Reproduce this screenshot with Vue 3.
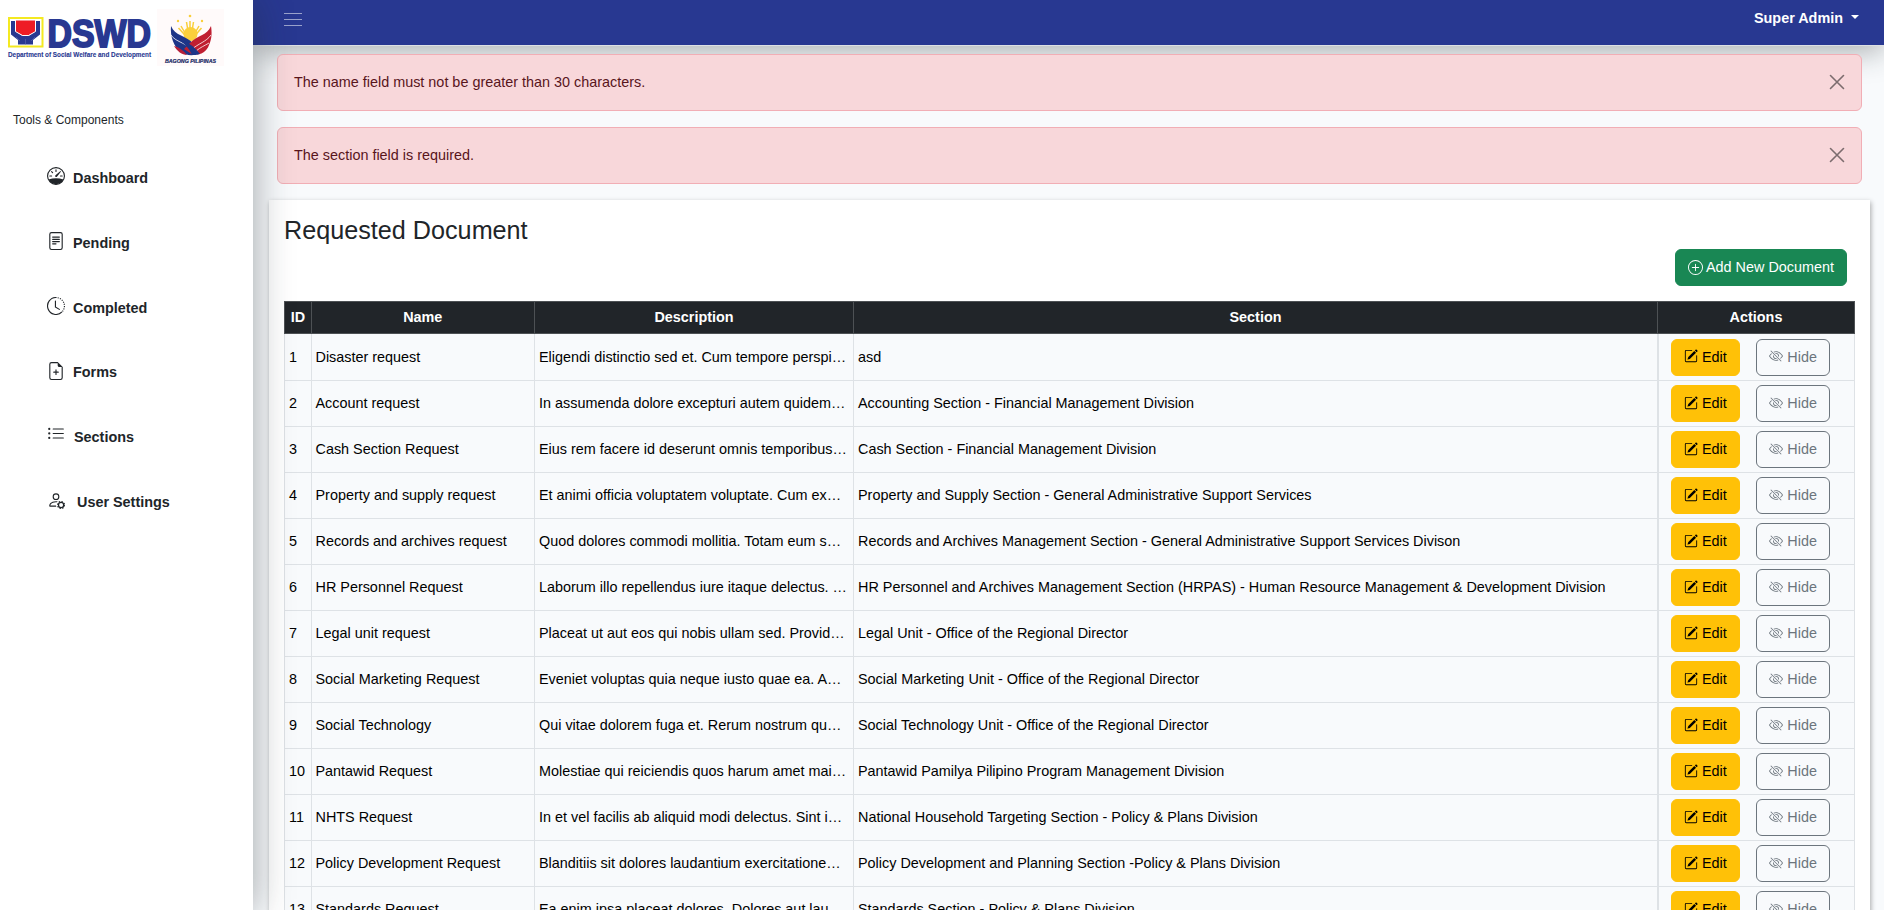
<script setup>
const nav = [
  { icon: 'dash', label: 'Dashboard' },
  { icon: 'file', label: 'Pending' },
  { icon: 'clock', label: 'Completed' },
  { icon: 'plus', label: 'Forms' },
  { icon: 'list', label: 'Sections' },
  { icon: 'gear', label: 'User Settings' },
]
const alerts = [
  'The name field must not be greater than 30 characters.',
  'The section field is required.',
]
const rows = [
  ['Disaster request', 'Eligendi distinctio sed et. Cum tempore perspi…', 'asd'],
  ['Account request', 'In assumenda dolore excepturi autem quidem…', 'Accounting Section - Financial Management Division'],
  ['Cash Section Request', 'Eius rem facere id deserunt omnis temporibus…', 'Cash Section - Financial Management Division'],
  ['Property and supply request', 'Et animi officia voluptatem voluptate. Cum ex…', 'Property and Supply Section - General Administrative Support Services'],
  ['Records and archives request', 'Quod dolores commodi mollitia. Totam eum s…', 'Records and Archives Management Section - General Administrative Support Services Divison'],
  ['HR Personnel Request', 'Laborum illo repellendus iure itaque delectus. …', 'HR Personnel and Archives Management Section (HRPAS) - Human Resource Management & Development Division'],
  ['Legal unit request', 'Placeat ut aut eos qui nobis ullam sed. Provid…', 'Legal Unit - Office of the Regional Director'],
  ['Social Marketing Request', 'Eveniet voluptas quia neque iusto quae ea. A…', 'Social Marketing Unit - Office of the Regional Director'],
  ['Social Technology', 'Qui vitae dolorem fuga et. Rerum nostrum qu…', 'Social Technology Unit - Office of the Regional Director'],
  ['Pantawid Request', 'Molestiae qui reiciendis quos harum amet mai…', 'Pantawid Pamilya Pilipino Program Management Division'],
  ['NHTS Request', 'In et vel facilis ab aliquid modi delectus. Sint i…', 'National Household Targeting Section - Policy & Plans Division'],
  ['Policy Development Request', 'Blanditiis sit dolores laudantium exercitatione…', 'Policy Development and Planning Section -Policy & Plans Division'],
  ['Standards Request', 'Ea enim ipsa placeat dolores. Dolores aut lau…', 'Standards Section - Policy & Plans Division'],
]
</script>

<template>
  <div class="app">
    <aside class="sidebar">
      <div class="brand">
        <svg class="dswd" width="145" height="42" viewBox="0 0 145 42">
          <rect x="1" y="1" width="33.5" height="28.5" fill="#fff" stroke="#f4e921" stroke-width="2" />
          <path d="M3 4h4.500v10l7 5h6l7-5V4h4.500v13.500l-7 5.500v4.500H10V23l-7-5.500z" fill="#283891" />
          <path d="M17.500 22v5.500M8 20l4 4M27 20l-4 4" stroke="#5f6cb0" stroke-width=".6" />
          <path d="M7.500 3h20v11.500l-7 4h-6l-7-4z" fill="#ee1c25" stroke="#fff" stroke-width="1" />
          <text x="39.500" y="29.800" class="word" textLength="103.500" lengthAdjust="spacingAndGlyphs">DSWD</text>
          <text x="0" y="39.500" class="tag" textLength="143" lengthAdjust="spacingAndGlyphs">Department of Social Welfare and Development</text>
        </svg>
        <svg class="bagong" width="67" height="57" viewBox="0 0 67 57">
          <rect width="67" height="57" fill="#fffafa" />
          <path d="M33 12v20M29.500 13l3 18M36.500 13l-3 18M24 17l8 14M42 17l-8 14M21.500 19l10 11M44.500 19L35 30" stroke="#f9cf3a" stroke-width="1.500" />
          <circle cx="33.500" cy="25" r="7" fill="#fbd03c" />
          <circle cx="33" cy="7" r="1.300" fill="#f9cf3a" /><circle cx="21" cy="12" r="1.200" fill="#f9cf3a" /><circle cx="45" cy="12" r="1.200" fill="#f9cf3a" />
          <path d="M14 17c4 10 14 9 22 17l7 10c-5 3-14 3-19-1-7-5-11-15-10-26z" fill="#1d3588" />
          <path d="M54 17c-4 10-14 9-21 17l-6 6 9 6c9 0 14-4 16-10 3-6 3-13 2-19z" fill="#c01f31" />
          <path d="M14 26c5 8 17 7 26 20M54 26c-5 7-12 8-20 15M52 34c-5 3-8 4-13 8" fill="none" stroke="#fffafa" stroke-width=".8" />
          <path d="M22 31c9 2 15 6 21 14-3 1-6 1-8 1-3-7-7-11-13-15z" fill="#1d3588" />
          <path d="M17 37c5 1 10 5 13 9-5 0-10-4-13-9z" fill="#b51f39" />
          <text x="8" y="53.500" class="bp" textLength="51" lengthAdjust="spacingAndGlyphs">BAGONG PILIPINAS</text>
        </svg>
      </div>
      <div class="tools">Tools &amp; Components</div>
      <nav>
        <a v-for="n in nav" :key="n.label" class="item" :class="'i-' + n.icon">
          <svg class="ico" viewBox="0 0 16 16" fill="currentColor">
            <template v-if="n.icon === 'dash'">
              <path d="M8 4a.5.5 0 0 1 .5.5V6a.5.5 0 0 1-1 0V4.500A.5.5 0 0 1 8 4M3.732 5.732a.5.5 0 0 1 .707 0l.915.914a.5.5 0 1 1-.708.708l-.914-.915a.5.5 0 0 1 0-.707M2 10a.5.5 0 0 1 .5-.5h1.586a.5.5 0 0 1 0 1H2.500A.5.5 0 0 1 2 10m9.500 0a.5.5 0 0 1 .5-.5h1.500a.5.5 0 0 1 0 1H12a.5.5 0 0 1-.5-.5m.754-4.246a.39.39 0 0 0-.527-.02L7.547 9.310a.91.91 0 1 0 1.302 1.258l3.434-4.297a.39.39 0 0 0-.029-.518z" transform="translate(0 -2)" />
              <circle cx="8" cy="8" r="7.500" fill="none" stroke="currentColor" />
              <path d="M1.300 11.200Q8 9 14.700 11.200A7.500 7.500 0 0 1 1.300 11.200z" />
            </template>
            <template v-else-if="n.icon === 'file'">
              <path d="M5 4a.5.5 0 0 0 0 1h6a.5.5 0 0 0 0-1zm-.5 2.500A.5.5 0 0 1 5 6h6a.5.5 0 0 1 0 1H5a.5.5 0 0 1-.5-.5M5 8a.5.5 0 0 0 0 1h6a.5.5 0 0 0 0-1zm0 2a.5.5 0 0 0 0 1h3a.5.5 0 0 0 0-1z" />
              <path d="M2 2a2 2 0 0 1 2-2h8a2 2 0 0 1 2 2v12a2 2 0 0 1-2 2H4a2 2 0 0 1-2-2zm10-1H4a1 1 0 0 0-1 1v12a1 1 0 0 0 1 1h8a1 1 0 0 0 1-1V2a1 1 0 0 0-1-1" />
            </template>
            <template v-else-if="n.icon === 'clock'">
              <path d="M8.500 .5A7.500 7.500 0 1 0 13.300 13.300" fill="none" stroke="currentColor" />
              <path d="M8.500 .5A7.500 7.500 0 0 1 13.300 13.300" fill="none" stroke="currentColor" stroke-dasharray="1 1.050" stroke-dashoffset="-1" />
              <path d="M7.500 3a.5.5 0 0 1 .5.5v5.210l3.248 1.856a.5.5 0 0 1-.496.868l-3.500-2A.5.5 0 0 1 7 9V3.500a.5.5 0 0 1 .5-.5" />
            </template>
            <template v-else-if="n.icon === 'plus'">
              <path d="M8 6.500a.5.5 0 0 1 .5.5v1.500H10a.5.5 0 0 1 0 1H8.500V11a.5.5 0 0 1-1 0V9.500H6a.5.5 0 0 1 0-1h1.500V7a.5.5 0 0 1 .5-.5" />
              <path d="M14 4.500V14a2 2 0 0 1-2 2H4a2 2 0 0 1-2-2V2a2 2 0 0 1 2-2h5.500zm-3 0A1.500 1.500 0 0 1 9.500 3V1H4a1 1 0 0 0-1 1v12a1 1 0 0 0 1 1h8a1 1 0 0 0 1-1V4.500z" />
            </template>
            <path v-else-if="n.icon === 'list'" fill-rule="evenodd" d="M5 11.500a.5.5 0 0 1 .5-.5h9a.5.5 0 0 1 0 1h-9a.5.5 0 0 1-.5-.5m0-4a.5.5 0 0 1 .5-.5h9a.5.5 0 0 1 0 1h-9a.5.5 0 0 1-.5-.5m0-4a.5.5 0 0 1 .5-.5h9a.5.5 0 0 1 0 1h-9a.5.5 0 0 1-.5-.5m-3 1a1 1 0 1 0 0-2 1 1 0 0 0 0 2m0 4a1 1 0 1 0 0-2 1 1 0 0 0 0 2m0 4a1 1 0 1 0 0-2 1 1 0 0 0 0 2" />
            <template v-else>
              <path d="M11 5a3 3 0 1 1-6 0 3 3 0 0 1 6 0M8 7a2 2 0 1 0 0-4 2 2 0 0 0 0 4m.256 7a4.500 4.500 0 0 1-.229-1.004H3c.001-.246.154-.986.832-1.664C4.484 10.680 5.711 10 8 10q.39 0 .74.025c.226-.341.496-.65.804-.918Q8.844 9.002 8 9c-5 0-6 3-6 4s1 1 1 1z" />
              <circle cx="12.500" cy="12.500" r="2.300" fill="none" stroke="currentColor" stroke-width="1.100" />
              <circle cx="12.500" cy="12.500" r="3.200" fill="none" stroke="currentColor" stroke-width=".9" stroke-dasharray="1.260 1.253" />
            </template>
          </svg>
          <span>{{ n.label }}</span>
        </a>
      </nav>
    </aside>

    <div class="main">
      <header>
        <svg class="burger" width="18" height="13" viewBox="0 0 18 13"><path d="M0 .5h18M0 6.500h18M0 12.500h18" stroke="#9aa2cc" stroke-width="1.200" /></svg>
        <div class="user">Super Admin <i class="caret"></i></div>
      </header>
      <div class="alerts">
        <div v-for="a in alerts" :key="a" class="alert">
          <span>{{ a }}</span>
          <svg width="16" height="16" viewBox="0 0 16 16"><path d="M1.500 1.500l13 13M14.500 1.500l-13 13" stroke="#7c6c6e" stroke-width="1.600" stroke-linecap="round" /></svg>
        </div>
      </div>
      <section class="card">
        <h4>Requested Document</h4>
        <div class="bar">
          <button class="btn add">
            <svg width="15" height="15" viewBox="0 0 16 16" fill="currentColor"><path d="M8 15A7 7 0 1 1 8 1a7 7 0 0 1 0 14m0 1A8 8 0 1 0 8 0a8 8 0 0 0 0 16" /><path d="M8 4a.5.5 0 0 1 .5.5v3h3a.5.5 0 0 1 0 1h-3v3a.5.5 0 0 1-1 0v-3h-3a.5.5 0 0 1 0-1h3v-3A.5.5 0 0 1 8 4" /></svg>
            <span>Add New Document</span>
          </button>
        </div>
        <div class="table">
          <div class="row head">
            <div>ID</div><div>Name</div><div>Description</div><div>Section</div><div>Actions</div>
          </div>
          <div v-for="(r, i) in rows" :key="i" class="row">
            <div>{{ i + 1 }}</div>
            <div>{{ r[0] }}</div>
            <div>{{ r[1] }}</div>
            <div>{{ r[2] }}</div>
            <div class="actions">
              <button class="btn edit">
                <svg width="14" height="14" viewBox="0 0 16 16" fill="currentColor"><path d="M15.502 1.940a.5.5 0 0 1 0 .706L14.459 3.690l-2-2L13.502.646a.5.5 0 0 1 .707 0zm-1.750 2.456-2-2-6.814 6.813a.5.5 0 0 0-.121.196l-.805 2.414a.25.25 0 0 0 .316.316l2.414-.805a.5.5 0 0 0 .196-.120z" /><path fill-rule="evenodd" d="M1 13.500A1.500 1.500 0 0 0 2.500 15h11a1.500 1.500 0 0 0 1.500-1.500v-6a.5.5 0 0 0-1 0v6a.5.5 0 0 1-.5.5h-11a.5.5 0 0 1-.5-.5v-11a.5.5 0 0 1 .5-.5H9a.5.5 0 0 0 0-1H2.500A1.500 1.500 0 0 0 1 2.500z" /></svg>
                <span>Edit</span>
              </button>
              <button class="btn hide">
                <svg width="14" height="14" viewBox="0 0 16 16" fill="currentColor"><path d="M13.359 11.238C15.060 9.720 16 8 16 8s-3-5.500-8-5.500a7 7 0 0 0-2.790.588l.770.771A6 6 0 0 1 8 3.500c2.120 0 3.879 1.168 5.168 2.457A13 13 0 0 1 14.828 8q-.086.130-.195.288c-.335.480-.830 1.120-1.465 1.755q-.247.248-.517.486z" /><path d="M11.297 9.176a3.500 3.500 0 0 0-4.474-4.474l.823.823a2.500 2.500 0 0 1 2.829 2.829zm-2.943 1.299.822.822a3.500 3.500 0 0 1-4.474-4.474l.823.823a2.500 2.500 0 0 0 2.829 2.829" /><path d="M3.350 5.470q-.270.240-.518.487A13 13 0 0 0 1.172 8l.195.288c.335.480.830 1.120 1.465 1.755C4.121 11.332 5.881 12.500 8 12.500c.716 0 1.390-.133 2.020-.360l.770.772A7 7 0 0 1 8 13.500C3 13.500 0 8 0 8s.939-1.721 2.641-3.238l.708.709zm10.296 8.884-12-12 .708-.708 12 12z" /></svg>
                <span>Hide</span>
              </button>
            </div>
          </div>
        </div>
      </section>
    </div>
  </div>
</template>

<style>
body { margin: 0; overflow: hidden; }
</style>
<style scoped>
* { box-sizing: border-box; }
.app { display: flex; width: 1884px; height: 910px; overflow: hidden; background: #f8fafc; font-family: "Liberation Sans", Arial, sans-serif; font-size: 14.4px; line-height: 1.5; color: #212529; }
.sidebar { position: relative; z-index: 2; flex: none; width: 253px; background: #fff; box-shadow: 0 2px 36px rgba(33, 44, 48, .42); }
.brand { display: flex; height: 111px; padding: 9px 0 0 8px; }
.brand svg { overflow: visible; }
.dswd { margin-top: 8px; }
.bagong { margin-left: 4px; }
.word { font: bold 39.500px "Liberation Sans", sans-serif; fill: #283891; stroke: #283891; stroke-width: 2px; }
.tag { font: bold 6.500px "Liberation Sans", sans-serif; fill: #283891; stroke: #283891; stroke-width: .1px; }
.bp { font: italic bold 5px "Liberation Sans", sans-serif; fill: #1b2b66; stroke: #1b2b66; stroke-width: .2px; }
.tools { padding-left: 13px; font-size: 12px; line-height: 18px; }
nav { padding-top: 17px; }
.item { display: flex; align-items: center; height: 64.750px; padding: 1px 0 0 47px; font-weight: 700; }
.ico { width: 18px; height: 18px; margin: -5px 8px 0 0; }
.i-list .ico { margin-top: -7px; }
.i-list span { padding-left: 1px; }
.i-gear span { padding-left: 4px; }
.main { flex: 1; display: flex; flex-direction: column; min-width: 0; }
header { flex: none; display: flex; justify-content: space-between; height: 45px; padding: 0 25px 0 31px; background: #283891; box-shadow: 0 1px #dde0e4, 0 6px 30px rgba(33, 44, 48, .38); }
.burger { margin-top: 13px; }
.user { display: flex; align-items: center; height: 38px; color: #fff; font-weight: 700; }
.caret { margin-left: 8px; margin-top: -4px; border: 4px solid transparent; border-top-color: #fff; border-bottom: 0; }
.alerts { position: relative; display: flex; flex-direction: column; gap: 16px; padding: 9px 22px 16px 24px; }
.alert { display: flex; justify-content: space-between; align-items: center; height: 57px; padding: 0 16px; border: 1px solid #f1aeb5; border-radius: 6px; background: #f8d7da; color: #58151c; }
.alert svg { margin-top: -2px; }
.card { position: relative; flex: none; margin: 0 14px 0 16px; padding: 15px 15px 0; background: #fff; box-shadow: 1px 2px 5px rgba(0, 0, 0, .33); }
h4 { margin: 0; font-size: 25.200px; font-weight: 400; line-height: 30px; }
.bar { display: flex; justify-content: flex-end; padding: 4px 8px 15px 0; }
.btn { display: flex; align-items: center; gap: 4px; height: 37px; padding: 0 12px; border: 1px solid; border-radius: 6px; font: inherit; }
.add { gap: 3px; color: #fff; background: #198754; border-color: #198754; }
.row { display: grid; grid-template-columns: 27px 223px 319px 804px 197px; height: 46px; border-bottom: 1px solid #dee2e6; border-left: 1px solid #dee2e6; background: #f8fafc; color: #000; }
.row > div { display: flex; align-items: center; padding: 1px 4px 0; border-right: 1px solid #dee2e6; white-space: nowrap; }
.row > div:nth-child(2) { padding-left: 3.500px; }
.row.head { height: 33px; background: #212529; color: #fff; border: 1px solid #4d5154; border-right: 0; font-weight: 700; }
.row.head > div { justify-content: center; border-color: #4d5154; }
.row:nth-child(2) { height: 47px; }
.row > .actions { padding: 0 0 0 12px; gap: 16px; border-left: 1px solid #dee2e6; }
.edit { background: #ffc107; border-color: #ffc107; color: #000; }
.hide { gap: 4.500px; padding-right: 12.500px; background: transparent; border-color: #6c757d; color: #6c757d; }
.actions svg { margin-top: -2px; }
.actions span { padding-top: 1px; }
</style>
